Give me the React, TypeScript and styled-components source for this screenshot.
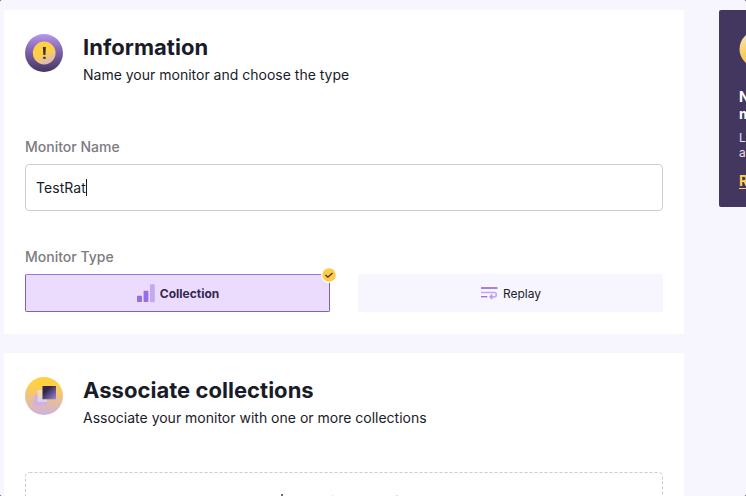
import React from "react";
import styled, { createGlobalStyle } from "styled-components";

const Global = createGlobalStyle`
  *, *::before, *::after { box-sizing: border-box; }
  body {
    margin: 0;
    background: #f7f6ff;
    color: #1a1b28;
    font-family: Inter, "Liberation Sans", sans-serif;
    overflow: hidden;
  }
`;

const Page = styled.main`
  position: relative;
  display: flex;
  align-items: flex-start;
  gap: 35px;
  width: 746px;
  height: 496px;
  padding: 10px 0 0 4px;
  overflow: hidden;
  background: #f7f6ff;
`;

const Column = styled.div`
  display: flex;
  flex: 0 0 680px;
  flex-direction: column;
  gap: 19px;
`;

const Card = styled.section<{ $height: number }>`
  flex: none;
  height: ${(p) => p.$height}px;
  padding: 24px 21px 0;
  background: #fff;
`;

const Header = styled.header`
  display: flex;
  gap: 20px;
  height: 62px;
  svg { flex: none; }
`;

const Title = styled.h2`
  margin: 0;
  font-size: 22px;
  line-height: 27px;
  font-weight: 700;
  letter-spacing: 0.03px;
  white-space: nowrap;
`;

const Subtitle = styled.p`
  margin: 4px 0 0;
  font-size: 14px;
  line-height: 20px;
`;

const Label = styled.div<{ $top?: number }>`
  height: 20px;
  margin-top: ${(p) => p.$top ?? 0}px;
  font-size: 14px;
  line-height: 20px;
  font-weight: 500;
  color: #7c7b80;
`;

const Field = styled.div`
  display: flex;
  align-items: center;
  height: 47px;
  margin: 7px 0 36px;
  padding-left: 10px;
  border: 1px solid #cecdd4;
  border-radius: 4px;
  font-size: 14px;
  letter-spacing: 0.06px;
`;

const Caret = styled.span`
  width: 1px;
  height: 17px;
  background: #1a1b28;
`;

const Options = styled.div`
  display: grid;
  grid-template-columns: 305px 305px;
  gap: 28px;
  margin-top: 7px;
`;

const Option = styled.div<{ $selected?: boolean }>`
  position: relative;
  display: flex;
  align-items: center;
  justify-content: center;
  gap: 5px;
  height: 38px;
  border: 1px solid ${(p) => (p.$selected ? "#7b66a8" : "#f7f6ff")};
  border-top-color: ${(p) => (p.$selected ? "#9873e6" : "#f7f6ff")};
  border-radius: 2px;
  background: ${(p) => (p.$selected ? "#ebdcfe" : "#f7f6ff")};
  color: ${(p) => (p.$selected ? "#35264f" : "#1a1b28")};
  font-size: 12px;
  font-weight: ${(p) => (p.$selected ? 700 : 400)};
`;

const Badge = styled.span`
  position: absolute;
  top: -8px;
  right: -8px;
  display: flex;
  width: 16px;
  height: 16px;
`;

const DropArea = styled.div`
  height: 90px;
  margin-top: 33px;
`;

const Aside = styled.aside`
  flex: none;
  width: 200px;
  height: 197px;
  padding: 20px;
  border-radius: 2px;
  background: #44375f;
  color: #fff;
  svg { display: block; }
`;

const AsideTitle = styled.h3`
  margin: 20px 0 0;
  font-size: 14px;
  line-height: 17px;
  font-weight: 700;
`;

const AsideText = styled.p`
  margin: 8px 0 0;
  font-size: 12px;
  line-height: 15px;
  color: #e5e1ee;
`;

const AsideLink = styled.span`
  display: inline-block;
  margin-top: 13px;
  border-bottom: 1px solid #ffd269;
  font-size: 14px;
  line-height: 15px;
  font-weight: 700;
  color: #ffcf52;
`;

const Corners = styled.svg`
  position: absolute;
  inset: 0;
`;

const InformationIcon = () => (
  <svg width="38" height="38" viewBox="0 0 38 38">
    <defs>
      <linearGradient id="infoDisc" x1="0" y1="0" x2="0" y2="1">
        <stop offset="0" stopColor="#b897f0" />
        <stop offset=".4" stopColor="#8468b4" />
        <stop offset="1" stopColor="#44365f" />
      </linearGradient>
      <linearGradient id="infoCoin" x1=".35" y1="0" x2=".8" y2="1">
        <stop offset=".45" stopColor="#ffd044" />
        <stop offset=".75" stopColor="#e8c099" />
        <stop offset="1" stopColor="#d6b9cf" />
      </linearGradient>
    </defs>
    <circle cx="19" cy="19" r="19" fill="url(#infoDisc)" />
    <circle cx="19.2" cy="19" r="11.4" fill="url(#infoCoin)" />
    <path d="M17.9 13h3l-.5 8h-2z" fill="#3b3128" />
    <rect x="18" y="22.8" width="2.8" height="2.2" rx="1" fill="#4b3b2c" />
  </svg>
);

const CollectionsIcon = () => (
  <svg width="38" height="38" viewBox="0 0 38 38">
    <defs>
      <linearGradient id="sun" x1="0" y1="0" x2="0" y2="1">
        <stop offset=".2" stopColor="#ffd044" />
        <stop offset=".6" stopColor="#e8bf95" />
        <stop offset="1" stopColor="#cdb1e0" />
      </linearGradient>
      <linearGradient id="tile" x1="0" y1="0" x2="1" y2="1">
        <stop offset=".3" stopColor="#30254b" />
        <stop offset="1" stopColor="#a38ad6" />
      </linearGradient>
      <linearGradient id="paper" x1="0" y1="0" x2="0" y2="1">
        <stop offset="0" stopColor="#f5e0a3" />
        <stop offset="1" stopColor="#dfcfea" />
      </linearGradient>
    </defs>
    <circle cx="19" cy="19" r="19" fill="url(#sun)" />
    <path d="M10 18h5v7h9l-4 3.500H8z" fill="#cdb0eb" />
    <path d="M12.500 13H22v12H12.500z" fill="url(#paper)" />
    <path d="M17.500 9H31v13.300H17.500z" fill="url(#tile)" />
  </svg>
);

const BarsIcon = () => (
  <svg width="19" height="19" viewBox="0 0 19 19">
    <rect x="1" y="11.8" width="5" height="6.2" rx=".7" fill="#976fe5" />
    <rect x="7.6" y="6.8" width="4.8" height="11.2" rx=".7" fill="#976fe5" />
    <rect x="14" y=".3" width="4.8" height="17.9" rx=".7" fill="#c5a8f4" />
  </svg>
);

const ReplayIcon = () => (
  <svg width="18" height="14" viewBox="0 0 18 14" fill="none">
    <path d="M1 2h16.5" stroke="#9b75df" strokeWidth="1.8" />
    <path d="M1 6.5h13.100a2.200 2.200 0 0 1 0 4.400h-3" stroke="#c3a5f1" strokeWidth="1.6" />
    <path d="M1 10.700h6.300" stroke="#9b75df" strokeWidth="1.4" />
    <path d="m12.300 8.500-2.200 2.300 2.200 2.300" stroke="#b18ceb" strokeWidth="1.3" />
  </svg>
);

export default function App() {
  return (
    <>
      <Global />
      <Page>
        <Column>
          <Card $height={324}>
            <Header>
              <InformationIcon />
              <div>
                <Title>Information</Title>
                <Subtitle>Name your monitor and choose the type</Subtitle>
              </div>
            </Header>
            <Label $top={41}>Monitor Name</Label>
            <Field>TestRat<Caret /></Field>
            <Label>Monitor Type</Label>
            <Options>
              <Option $selected>
                <BarsIcon />
                Collection
                <Badge>
                  <svg width="16" height="16" viewBox="0 0 16 16">
                    <circle cx="8" cy="8" r="8" fill="#fff" />
                    <circle cx="8" cy="8" r="6.8" fill="#ffcc47" />
                    <path d="m4.5 8 2.4 2.2L11.5 6" fill="none" stroke="#40332a" strokeWidth="1.3" />
                  </svg>
                </Badge>
              </Option>
              <Option>
                <ReplayIcon />
                Replay
              </Option>
            </Options>
          </Card>
          <Card $height={200}>
            <Header>
              <CollectionsIcon />
              <div>
                <Title>Associate collections</Title>
                <Subtitle>Associate your monitor with one or more collections</Subtitle>
              </div>
            </Header>
            <DropArea>
              <svg width="638" height="90" viewBox="0 0 638 90">
                <rect x=".5" y=".5" width="637" height="100" rx="4" fill="none" stroke="#cccbd0" strokeDasharray="3 2" />
                <path d="M257 22v12M251 28h12" stroke="#6e6d72" strokeWidth="2" />
                <path d="M307 23.500h1M371 23.500h2" stroke="#dedde0" />
              </svg>
            </DropArea>
          </Card>
        </Column>
        <Aside>
          <svg width="38" height="38" viewBox="0 0 38 38">
            <defs>
              <linearGradient id="asideSun" x1="0" y1="0" x2="0" y2="1">
                <stop offset=".2" stopColor="#f5dfa8" />
                <stop offset=".7" stopColor="#f8cc55" />
              </linearGradient>
            </defs>
            <circle cx="19" cy="19" r="18.5" fill="url(#asideSun)" />
          </svg>
          <AsideTitle>N<br />m</AsideTitle>
          <AsideText>L<br />a</AsideText>
          <AsideLink>R</AsideLink>
        </Aside>
        <Corners width="746" height="496" viewBox="0 0 746 496" fill="#77767c">
          <path d="M0 0h1.5L0 1.5zM746 0h-1.5l1.5 1.5zM0 496h1.5L0 494.5zM746 496h-1.5l1.5-1.5z" />
        </Corners>
      </Page>
    </>
  );
}
